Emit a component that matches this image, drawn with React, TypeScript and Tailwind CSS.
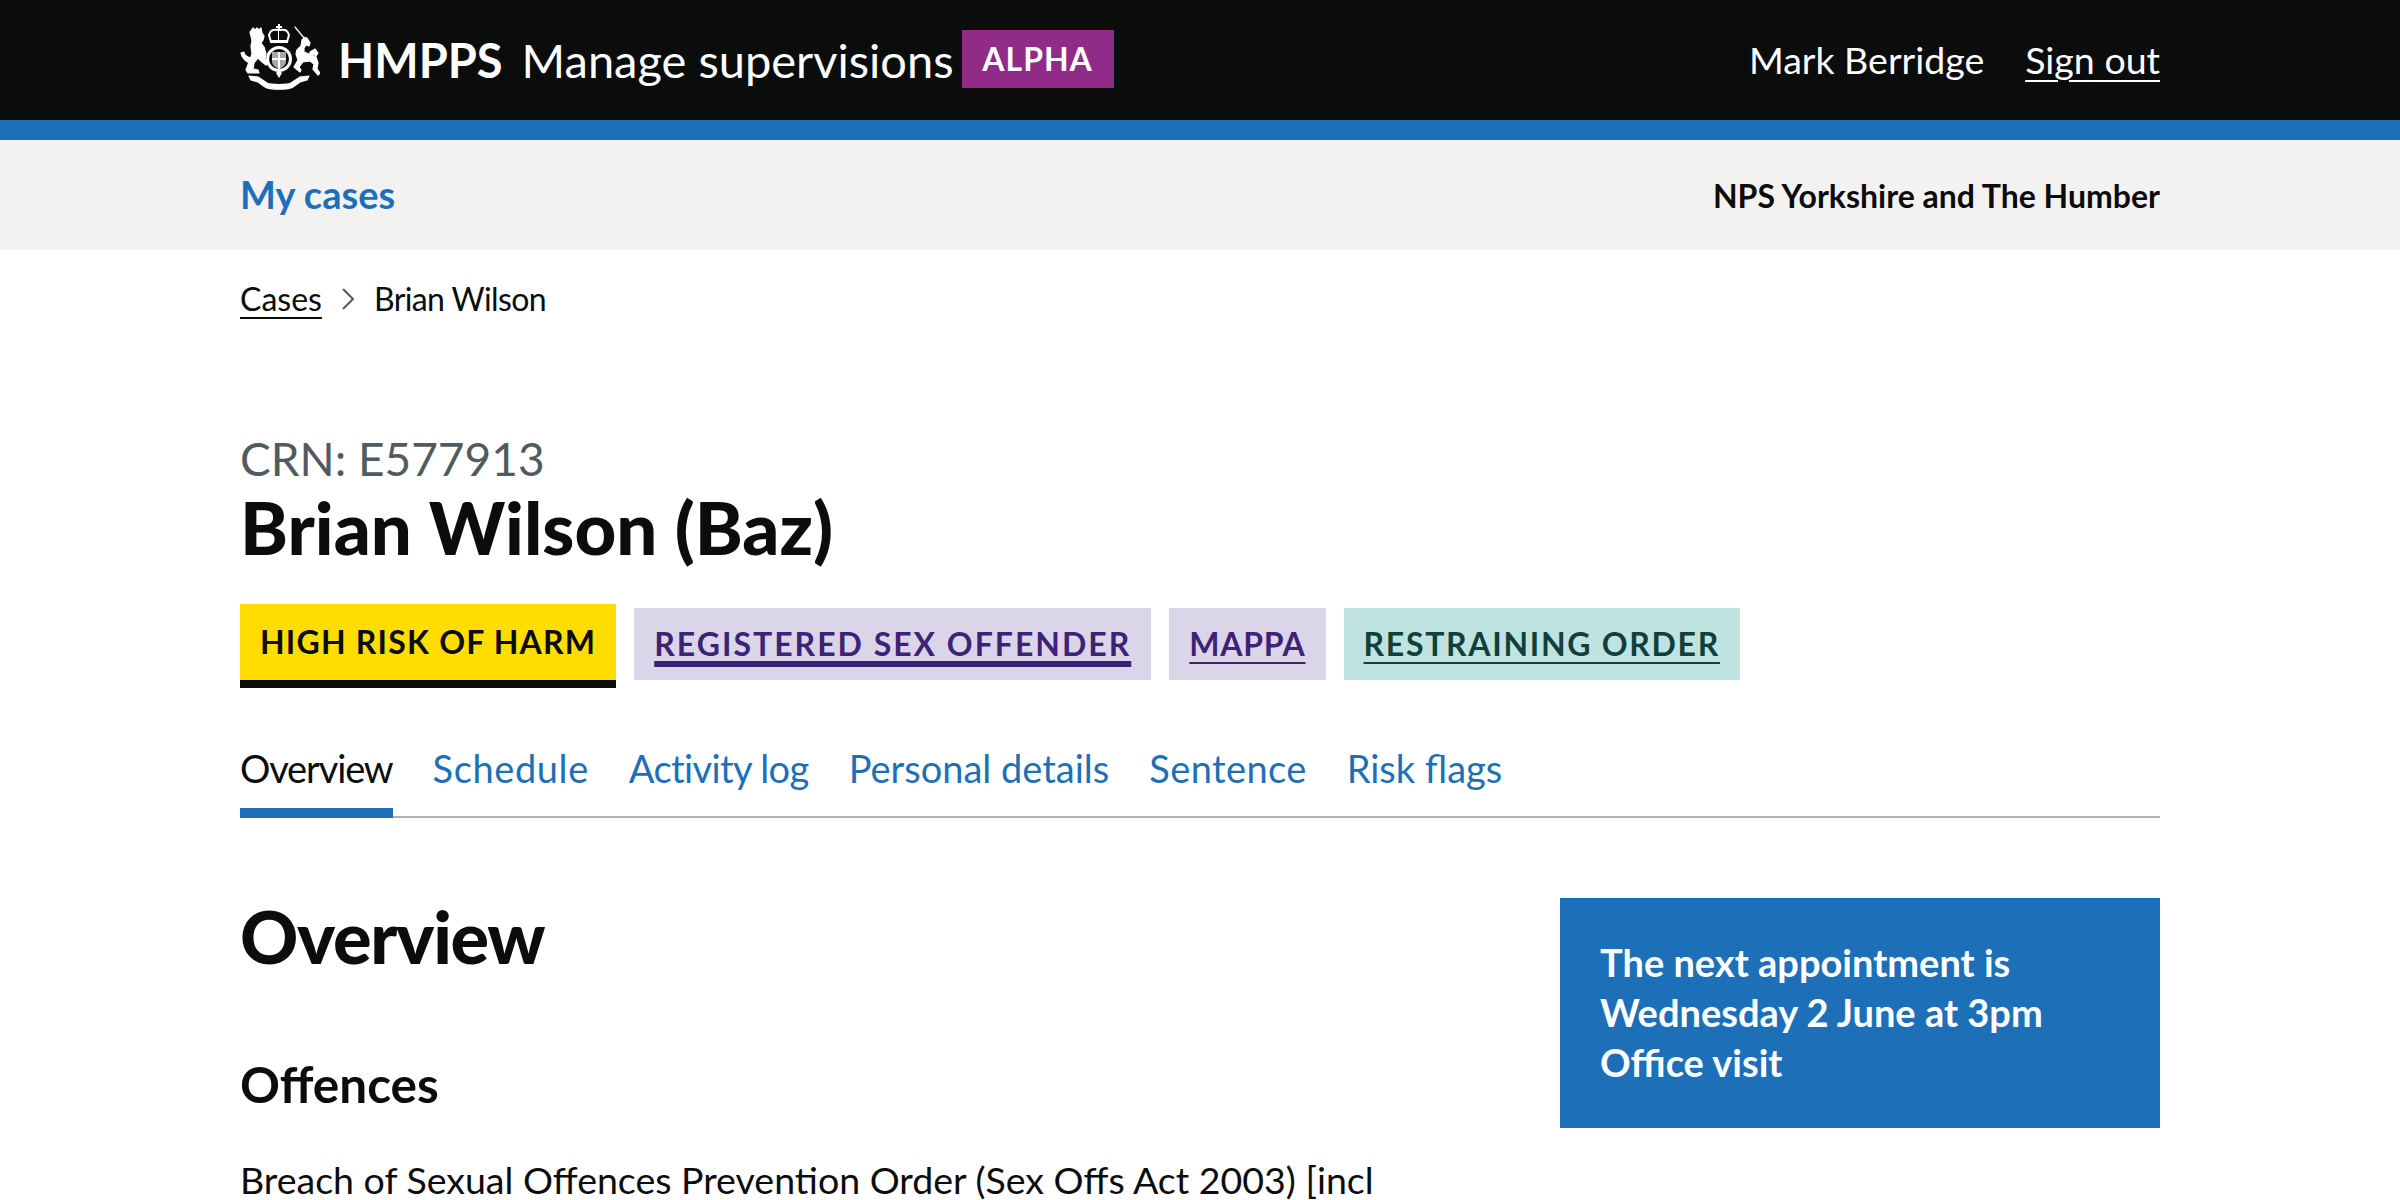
import React from 'react';

const tabs = [
  { label: 'Schedule', tracking: 'tracking-[0.6px]' },
  { label: 'Activity log', tracking: 'tracking-[-0.6px]' },
  { label: 'Personal details', tracking: 'tracking-[0px]' },
  { label: 'Sentence', tracking: 'tracking-[0.4px]' },
  { label: 'Risk flags', tracking: 'tracking-[0px]' },
];

function Crest() {
  return (
    <svg viewBox="20 14 80 67" className="mb-[5px] h-[67px] w-[80px]" fill="#fff">
      {/* crown */}
      <path d="M58 14h2v2h2v2h-2v2h-2v-2h-2v-2h2z" />
      <path d="M49 25c1-5 5-6 9-5h2c4-1 8 0 9 5l-2 7H51z" fill="none" stroke="#fff" strokeWidth="2" />
      <path d="M50 30h18v3H50z" />
      <path d="M58.500 20v10" stroke="#fff" strokeWidth="1" />
      {/* garter and shield */}
      <circle cx="59" cy="49" r="11.500" fill="none" stroke="#fff" strokeWidth="3" />
      <path d="M52 42h14v9c0 4-3 6-7 8-4-2-7-4-7-8z" fill="#a9a9a9" />
      <path d="M58 42h2v17h-2zM52 48h14v2H52z" fill="#fff" />
      <path d="M59 60l3 3-3 5-3-5z" />
      <g stroke="#fff" strokeWidth="1.200" strokeLinejoin="round">
        {/* lion */}
        <path d="M33 18l2 2 2-2 2 2 2-2 1 5 2 3-1 4-2 3 3 4 2 7-1 5 3 4-2 2-5-4-3-3-4 5-1 6 5 1 1 3H28l-2-3 3-8 3-8-1-8 1-5-1-5-1-4z" />
        <path d="M31 48c-4-1-7-3-7-6l-3 1 1 3c2 4 5 6 8 7z" />
        {/* unicorn */}
        <path d="M75 17l8 10 4 1 3 5-1 3-3-1-2 3v4l5 2 7 3 2 6-1 6 3 4-2 2-5-6 1-5-4-3-7 1-4 5 2 3-1 2-6-5 4-7-2-6 1-4 4-4 1-6 2-2z" />
        <path d="M90 42l5-3 3 4-2 3-3-2-3 1z" />
        {/* motto ribbon */}
        <path d="M29 66l9 1 9 6c4 2 20 2 24 0l9-6 9-1-2 4-7 2-7 5c-4 3-24 3-28 0l-7-5-7-2z" />
      </g>
    </svg>
  );
}

export default function App() {
  return (
    <div className="h-[1200px] overflow-hidden bg-white text-[#0b0c0c] font-['Lato','Liberation_Sans',sans-serif]">
      {/* Header */}
      <header className="h-[140px] border-b-[20px] border-[#1d70b8] bg-[#0b0c0c]">
        <div className="mx-auto flex h-full w-[1920px] items-center justify-between text-white">
          <div className="flex items-center">
            <Crest />
            <span className="ml-[18px] text-[47px] font-bold">HMPPS</span>
            <span className="ml-[19px] text-[47px]">Manage supervisions</span>
            <span className="mb-[3px] ml-[8px] flex h-[58px] w-[152px] items-center justify-center bg-[#912b88] text-[32px] font-bold tracking-[1px]">ALPHA</span>
          </div>
          <div className="flex items-center text-[37.500px]">
            <span>Mark Berridge</span>
            <a className="ml-[41px] underline decoration-2 underline-offset-[6px]">Sign out</a>
          </div>
        </div>
      </header>

      {/* Sub nav */}
      <div className="h-[110px] bg-[#f3f2f1]">
        <div className="mx-auto flex h-full w-[1920px] items-center justify-between">
          <a className="mb-[2px] text-[38px] font-bold text-[#1d70b8]">My cases</a>
          <span className="mt-[2px] text-[32px] font-bold">NPS Yorkshire and The Humber</span>
        </div>
      </div>

      <main className="mx-auto w-[1920px]">
        {/* Breadcrumbs */}
        <div className="flex items-center pt-[29px] text-[32px] leading-[40px]">
          <a className="underline decoration-2 underline-offset-[6px]">Cases</a>
          <svg viewBox="0 0 14 24" className="mx-[19px] h-[24px] w-[14px] text-[#505a5f]" fill="none" stroke="currentColor" strokeWidth="2">
            <path d="M2 2l10 10L2 22" />
          </svg>
          <span className="tracking-[-0.6px]">Brian Wilson</span>
        </div>

        {/* Caption and title */}
        <p className="mt-[115px] text-[46px] leading-[50px] text-[#505a5f]">CRN: E577913</p>
        <h1 className="mt-[3px] text-[72.500px] font-black leading-[80px]">Brian Wilson (Baz)</h1>

        {/* Risk tags */}
        <div className="mt-[37px] flex items-start gap-[18px] text-[32px] font-bold">
          <span className="flex h-[84px] items-center border-b-[8px] border-[#0b0c0c] bg-[#ffdd00] px-[20px] tracking-[1.200px]">HIGH RISK OF HARM</span>
          <a className="mt-[4px] flex h-[72px] items-center bg-[#dbd5e9] px-[20px] tracking-[2px] text-[#3d2375] underline decoration-[6px] underline-offset-[5px]">REGISTERED SEX OFFENDER</a>
          <a className="mt-[4px] flex h-[72px] items-center bg-[#dbd5e9] px-[20px] tracking-[0.700px] text-[#3d2375] underline decoration-2 underline-offset-[6px]">MAPPA</a>
          <a className="mt-[4px] flex h-[72px] items-center bg-[#bfe3e0] px-[20px] tracking-[1.700px] text-[#10403c] underline decoration-2 underline-offset-[6px]">RESTRAINING ORDER</a>
        </div>

        {/* Tabs */}
        <nav className="mt-[40px] flex h-[90px] gap-[40px] border-b-2 border-[#b1b4b6] text-[38px] leading-[80px]">
          <span className="h-[90px] border-b-[10px] border-[#1d70b8] tracking-[-1.150px]">Overview</span>
          {tabs.map((tab) => (
            <a key={tab.label} className={`text-[#1d70b8] ${tab.tracking}`}>{tab.label}</a>
          ))}
        </nav>

        <div className="mt-[80px] flex justify-between">
          <div className="w-[1240px]">
            <h2 className="text-[72px] font-black leading-[76px] tracking-[-1.300px]">Overview</h2>
            <h3 className="mt-[85px] text-[49.500px] font-bold leading-[50px]">Offences</h3>
            <p className="mt-[46px] text-[37.500px] leading-[50px]">Breach of Sexual Offences Prevention Order (Sex Offs Act 2003) [incl</p>
          </div>
          <aside className="w-[600px]">
            <div className="h-[230px] bg-[#1d70b8] px-[40px] pb-[40px] pt-[39px] text-[38px] font-bold leading-[50px] text-white">
              <p>The next appointment is</p>
              <p>Wednesday 2 June at 3pm</p>
              <p>Office visit</p>
            </div>
          </aside>
        </div>
      </main>
    </div>
  );
}
